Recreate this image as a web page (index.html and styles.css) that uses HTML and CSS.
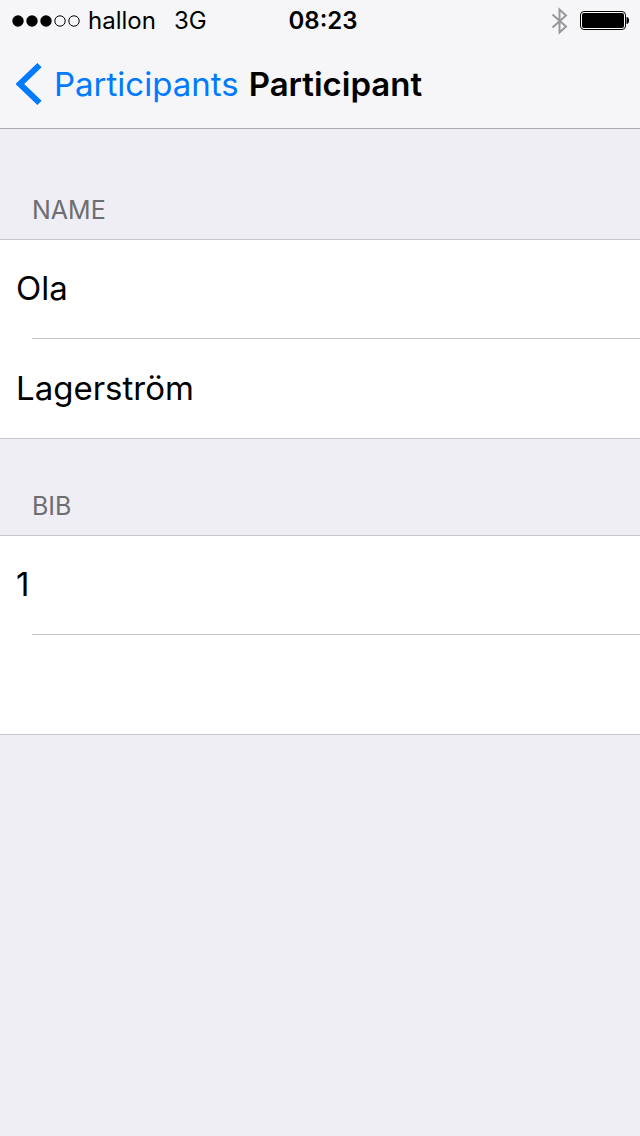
FILE: index.html
```html
<!DOCTYPE html>
<html lang="en">
<head>
<meta charset="utf-8">
<meta name="viewport" content="width=device-width, initial-scale=1">
<title>Participant</title>
<link rel="stylesheet" href="styles.css">
</head>
<body>
<header class="header">
  <div class="status">
    <div class="status-left">
      <svg class="signal" width="68" height="12" viewBox="0 0 68 12" role="img" aria-label="Signal strength 3 of 5">
        <circle cx="6" cy="6" r="5.7"/><circle cx="20" cy="6" r="5.7"/><circle cx="34" cy="6" r="5.7"/>
        <circle class="empty" cx="48" cy="6" r="5.2"/><circle class="empty" cx="62" cy="6" r="5.2"/>
      </svg>
      <span class="carrier">hallon</span>
      <span>3G</span>
    </div>
    <time class="clock">08:23</time>
    <div class="status-right">
      <svg class="bluetooth" width="17" height="28" viewBox="0 0 17 28" role="img" aria-label="Bluetooth">
        <path d="M1.5 7.500 15 19.500 8.500 25.500V2.500L15 8.500 1.500 20.500"/>
      </svg>
      <svg width="50" height="20" viewBox="0 0 50 20" role="img" aria-label="Battery full">
        <rect class="battery-case" x=".5" y=".5" width="45" height="18" rx="3.500"/>
        <rect x="2" y="2" width="42" height="15" rx="2"/>
        <path d="M46.500 6c1.700 0 2.500 1.500 2.500 3.500s-.8 3.500-2.500 3.500z"/>
      </svg>
    </div>
  </div>
  <nav class="nav">
    <a class="back" href="#participants">
      <svg class="chevron" width="26" height="42" viewBox="0 0 26 42" aria-hidden="true">
        <path d="M23.500 2.200 3.800 21l19.700 18.800"/>
      </svg>
      Participants
    </a>
    <h1 class="title">Participant</h1>
  </nav>
</header>
<main>
  <form class="form">
    <section class="section">
      <h2 class="section-title" id="name-title">NAME</h2>
      <div class="group" role="group" aria-labelledby="name-title">
        <div class="row"><input class="field" type="text" aria-label="First name" value="Ola"></div>
        <div class="row"><input class="field" type="text" aria-label="Last name" value="Lagerström"></div>
      </div>
    </section>
    <section class="section">
      <h2 class="section-title" id="bib-title">BIB</h2>
      <div class="group" role="group" aria-labelledby="bib-title">
        <div class="row"><input class="field" type="text" inputmode="numeric" aria-label="Bib number" value="1"></div>
        <div class="row"><input class="field" type="text" aria-label="Additional bib"></div>
      </div>
    </section>
  </form>
</main>
</body>
</html>
```

FILE: styles.css
```css
* {
  box-sizing: border-box;
}

body {
  margin: 0;
  min-height: 100vh;
  background: #efeef4;
  color: #000;
  font-family: Inter, "Liberation Sans", sans-serif;
}

.header {
  background: #f6f6f8;
  border-bottom: 1px solid #a9a9ac;
}

.status {
  display: grid;
  grid-template-columns: 1fr auto 1fr;
  align-items: center;
  height: 42px;
  padding: 0 6px 0 12px;
  font-size: 24px;
  line-height: 42px;
}

.status-left,
.status-right {
  display: flex;
  align-items: center;
}

.status-right {
  justify-content: flex-end;
  gap: 12px;
  padding-right: 4px;
}

.signal .empty {
  fill: none;
  stroke: #000;
  stroke-width: 1;
}

.carrier {
  margin: 0 18px 0 8px;
}

.clock {
  font-weight: 600;
}

.bluetooth {
  fill: none;
  stroke: #98989b;
  stroke-width: 2;
}

.battery-case {
  fill: #fff;
  stroke: #000;
  stroke-width: 1;
}

.nav {
  display: flex;
  align-items: center;
  gap: 10px;
  height: 86px;
  padding: 0 16px 2px;
  font-size: 33px;
  line-height: 40px;
}

.back {
  display: flex;
  align-items: center;
  gap: 12px;
  color: #007aff;
  text-decoration: none;
}

.chevron {
  fill: none;
  stroke: #007aff;
  stroke-width: 6;
}

.title {
  margin: 0;
  font-size: 33px;
  font-weight: 600;
}

.form {
  padding-top: 14px;
}

.section-title {
  margin: 0;
  padding: 51px 32px 12px;
  color: #6d6d72;
  font-size: 25px;
  font-weight: 400;
  line-height: 33px;
}

.group {
  background: #fff;
  border: 1px solid #c8c7cc;
  border-width: 1px 0;
}

.row + .row::before {
  content: "";
  display: block;
  margin-left: 32px;
  border-top: 1px solid #c8c7cc;
}

.field {
  display: block;
  width: 100%;
  height: 98px;
  padding: 0 16px 2px;
  border: 0;
  outline: 0;
  background: transparent;
  color: #000;
  font: inherit;
  font-size: 33px;
}

.row + .row .field {
  height: 99px;
}
```
